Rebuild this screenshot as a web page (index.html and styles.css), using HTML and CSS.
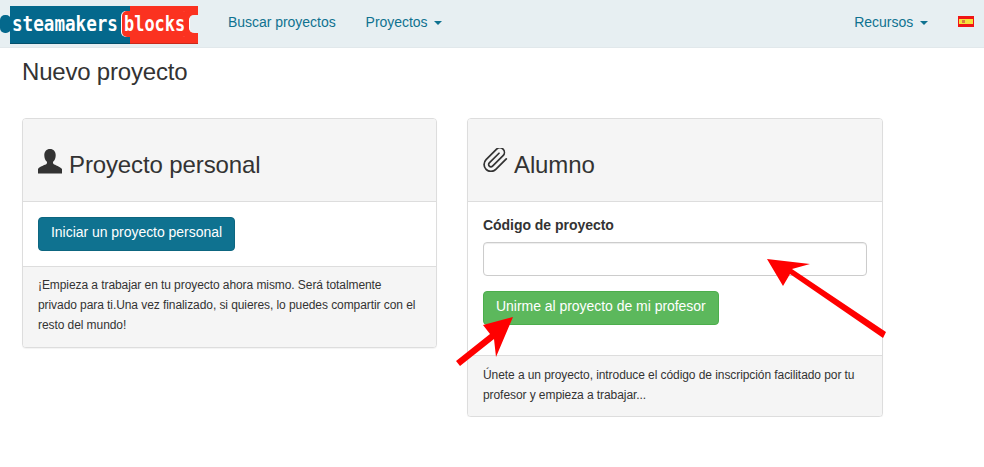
FILE: index.html
```html
<!DOCTYPE html>
<html lang="es">
<head>
  <meta charset="UTF-8">
  <title>Nuevo proyecto</title>
  <link rel="stylesheet" href="styles.css">
</head>
<body>
  <nav class="navbar">
    <a class="logo" href="#">
      <span class="logo-tab"></span>
      <span class="logo-blue"><span class="logo-text">steamakers</span></span>
      <span class="logo-red"><span class="logo-word"><span class="logo-text">blocks</span></span><span class="logo-notch"></span></span>
    </a>
    <ul class="nav">
      <li><a href="#">Buscar proyectos</a></li>
      <li><a href="#">Proyectos <span class="caret"></span></a></li>
    </ul>
    <ul class="nav nav-right">
      <li><a href="#">Recursos <span class="caret"></span></a></li>
      <li>
        <a href="#" class="flag-link">
          <svg class="flag" width="16" height="11" viewBox="0 0 16 11">
            <rect width="16" height="11" fill="#f01515"/>
            <rect x="1" y="3" width="14" height="5" fill="#f6e33a"/>
            <rect x="4" y="4" width="3" height="3" fill="#d9803a"/>
          </svg>
        </a>
      </li>
    </ul>
  </nav>

  <main class="container">
    <h3 class="page-title">Nuevo proyecto</h3>
    <div class="panels">
      <section class="panel panel-personal">
        <div class="panel-heading">
          <h2>
            <svg class="icon icon-user" width="24" height="25" viewBox="0 0 24 25">
              <path fill="#333" d="M12 0c3.600 0 5.700 2.600 5.700 6.200 0 2.600-1 5-2.400 6.400-.5.500-.5 1.700.2 2.300 1.200 1 7 2.600 8.500 5.100V24.400H0V19.900c1.500-2.500 7.300-4 8.500-5 .7-.6.700-1.800.2-2.300C7.300 11.200 6.300 8.800 6.300 6.200 6.300 2.600 8.400 0 12 0z"/>
            </svg>
            Proyecto personal
          </h2>
        </div>
        <div class="panel-body">
          <button class="btn btn-primary">Iniciar un proyecto personal</button>
        </div>
        <div class="panel-footer">
          ¡Empieza a trabajar en tu proyecto ahora mismo. Será totalmente privado para ti.Una vez finalizado, si quieres, lo puedes compartir con el resto del mundo!
        </div>
      </section>

      <section class="panel panel-student">
        <div class="panel-heading">
          <h2>
            <svg class="icon" width="25" height="24" viewBox="1.500 1.500 21 21">
              <path fill="none" stroke="#333" stroke-width="1.500" stroke-linecap="round" stroke-linejoin="round" d="M21.440 11.050l-9.190 9.190a6 6 0 0 1-8.490-8.490l9.190-9.190a4 4 0 0 1 5.660 5.660l-9.200 9.190a2 2 0 0 1-2.830-2.830l8.490-8.480"/>
            </svg>
            Alumno
          </h2>
        </div>
        <div class="panel-body">
          <label for="code">Código de proyecto</label>
          <input id="code" type="text">
          <button class="btn btn-success">Unirme al proyecto de mi profesor</button>
        </div>
        <div class="panel-footer">
          Únete a un proyecto, introduce el código de inscripción facilitado por tu profesor y empieza a trabajar...
        </div>
      </section>
    </div>
  </main>

  <!-- flechas rojas pintadas encima de la captura -->
  <svg class="arrows" width="984" height="467" viewBox="0 0 984 467">
    <path fill="#f00" d="M767 259 810 264 792 269 886 332 883 338 790 274 783 286z"/>
    <path fill="#f00" d="M513 317 496 357 494 339 460 366 456 361 490 334 483 325z"/>
  </svg>
</body>
</html>
```

FILE: styles.css
```css
* {
  box-sizing: border-box;
}
body {
  margin: 0;
  font-family: "Liberation Sans", Arial, sans-serif;
  font-size: 14px;
  line-height: 20px;
  letter-spacing: -.035px;
  color: #333;
  background: #fff;
}
a {
  color: #0f7290;
  text-decoration: none;
}

/* navbar */
.navbar {
  display: flex;
  align-items: flex-start;
  height: 48px;
  background: #e7eff2;
  border-bottom: 1px solid #e1e8eb;
}
.logo {
  display: flex;
  align-items: center;
  height: 38px;
  margin-top: 6px;
  width: 198px;
  flex: none;
  position: relative;
  padding-left: 10px;
}
.logo-tab {
  position: absolute;
  left: 0;
  top: 9px;
  width: 11px;
  height: 18px;
  background: #04688c;
  border-radius: 5px;
}
.logo-text {
  display: block;
  transform: scaleX(.8);
  transform-origin: left center;
  font-family: "DejaVu Sans Mono", monospace;
  font-size: 22px;
  font-weight: bold;
  line-height: 26px;
  letter-spacing: 0;
  color: #fff;
}
.logo-blue {
  display: flex;
  align-items: center;
  width: 120px;
  height: 38px;
  padding: 0 0 2px 2px;
  background: #04688c;
  border-bottom: 1px solid #04506c;
  white-space: nowrap;
}
.logo-red {
  display: flex;
  align-items: center;
  justify-content: space-between;
  width: 68px;
  height: 38px;
  background: #fb3220;
  border-bottom: 1px solid #c92a1c;
}
.logo-word {
  width: 66px;
  margin-left: -8px;
  margin-bottom: 2px;
  padding-left: 2px;
  background: #fb3220;
  border-radius: 5px;
  box-shadow: -1px 0 0 #fff;
}
.logo-word .logo-text {
  transform: scaleX(.77);
}
.logo-notch {
  flex: none;
  width: 9px;
  height: 18px;
  margin-bottom: 2px;
  background: #e7eff2;
  border-left: 1px solid #fff;
  border-radius: 5px 0 0 5px;
}
.nav {
  display: flex;
  margin: 0;
  padding: 0 0 0 15px;
  list-style: none;
}
.nav a {
  display: block;
  padding: 12px 15px;
}
.nav-right {
  margin-left: auto;
  padding: 0;
}
.nav-right .flag-link {
  padding: 11px 10px 0 15px;
}
.flag {
  display: block;
  margin-top: 5px;
}
.caret {
  display: inline-block;
  width: 0;
  height: 0;
  margin-left: 3px;
  vertical-align: middle;
  border-top: 4px solid;
  border-left: 4px solid transparent;
  border-right: 4px solid transparent;
}

/* contenido */
.container {
  padding: 0 22px;
}
.page-title {
  margin: 9px 0 31px;
  font-size: 24px;
  font-weight: normal;
  line-height: 30px;
  letter-spacing: -.2px;
}
.panels {
  display: flex;
  align-items: flex-start;
  gap: 30px;
}
.panel {
  background: #fff;
  border: 1px solid #ddd;
  border-radius: 4px;
  box-shadow: 0 1px 1px rgba(0, 0, 0, .05);
}
.panel-personal {
  width: 415px;
}
.panel-student {
  width: 416px;
}
.panel-heading {
  height: 83px;
  padding: 31px 15px 0;
  background: #f5f5f5;
  border-bottom: 1px solid #ddd;
  border-radius: 3px 3px 0 0;
}
.panel-heading h2 {
  display: flex;
  align-items: center;
  gap: 6px;
  margin: 0;
  font-size: 24px;
  font-weight: normal;
  line-height: 30px;
  letter-spacing: -.12px;
}
.icon {
  flex: none;
  margin-top: -10px;
}
.icon-user {
  margin-top: -7px;
  margin-right: 1px;
}
.panel-body {
  padding: 15px;
}
.panel-footer {
  padding: 8px 15px 12px;
  background: #f5f5f5;
  border-top: 1px solid #ddd;
  border-radius: 0 0 3px 3px;
  font-size: 12px;
  letter-spacing: -.075px;
}
.panel-student .panel-footer {
  padding: 9px 15px 11px;
}
.panel-student .panel-body {
  padding-bottom: 30px;
}
.panel-student .panel-body label {
  margin-top: -2px;
}
label {
  display: block;
  margin-bottom: 7px;
  font-weight: bold;
}
input {
  display: block;
  width: 100%;
  height: 34px;
  margin-bottom: 15px;
  padding: 6px 12px;
  border: 1px solid #ccc;
  border-radius: 4px;
  box-shadow: inset 0 1px 1px rgba(0, 0, 0, .075);
}
.btn {
  display: block;
  height: 34px;
  padding: 4px 12px 8px;
  border: 1px solid transparent;
  border-radius: 4px;
  color: #fff;
  font-family: inherit;
  font-size: 14px;
  line-height: 20px;
  letter-spacing: inherit;
}
.btn-primary {
  background: #0f7290;
  border-color: #0d6680;
}
.btn-success {
  background: #5cb85c;
  border-color: #4cae4c;
}
.arrows {
  position: absolute;
  left: 0;
  top: 0;
  pointer-events: none;
}
```
